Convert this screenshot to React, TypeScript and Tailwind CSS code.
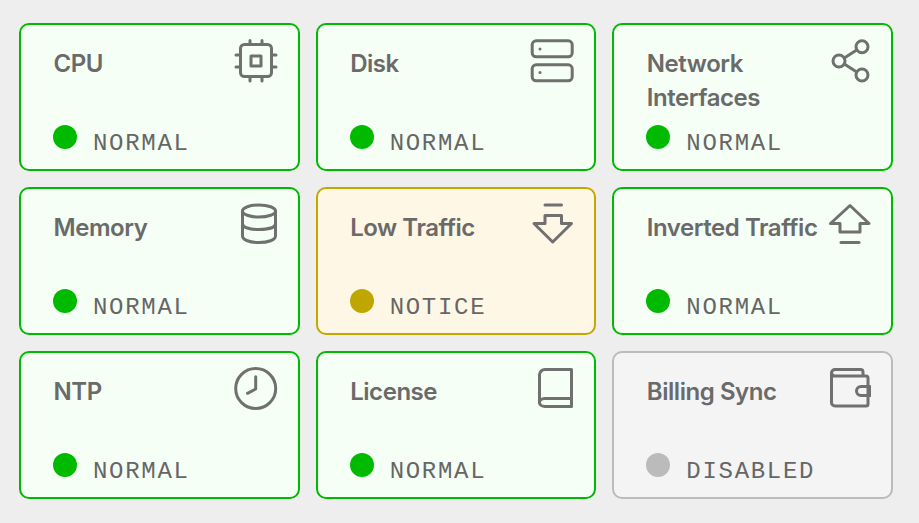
import type { ReactNode } from 'react';

type Status = 'normal' | 'notice' | 'disabled';

interface CardData {
  title: ReactNode;
  status: Status;
  icon: ReactNode;
}

const cardStyles: Record<Status, string> = {
  normal: 'border-[#00ba00] bg-[#f5fff5]',
  notice: 'border-[#c4a800] bg-[#fff7e5]',
  disabled: 'border-[#bbbbbb] bg-[#f4f4f4]',
};

const dotStyles: Record<Status, string> = {
  normal: 'bg-[#00ba00]',
  notice: 'bg-[#bfa600]',
  disabled: 'bg-[#bbbbbb]',
};

function Icon({ children }: { children: ReactNode }) {
  return (
    <svg
      viewBox="0 0 44 44"
      className="h-[44px] w-[44px] shrink-0 text-[#707070]"
      fill="none"
      stroke="currentColor"
      strokeWidth="3"
      strokeLinecap="round"
      strokeLinejoin="round"
    >
      {children}
    </svg>
  );
}

const cards: CardData[] = [
  {
    title: 'CPU',
    status: 'normal',
    icon: (
      <Icon>
        <rect x="6.5" y="5.5" width="31" height="32" rx="4" />
        <rect x="17" y="17" width="10" height="10" />
        <path d="M16 1.5v4M28 1.5v4M16 38v4M28 38v4M2 16h4M2 28h4M38 16h4M38 28h4" />
      </Icon>
    ),
  },
  {
    title: 'Disk',
    status: 'normal',
    icon: (
      <Icon>
        <rect x="2.2" y="1.8" width="40" height="16" rx="4" />
        <rect x="2.2" y="25.8" width="40" height="16" rx="4" />
        <circle cx="10" cy="10" r="1.5" fill="currentColor" stroke="none" />
        <circle cx="10" cy="33.5" r="1.5" fill="currentColor" stroke="none" />
      </Icon>
    ),
  },
  {
    title: 'Network Interfaces',
    status: 'normal',
    icon: (
      <Icon>
        <circle cx="35" cy="7.7" r="6" />
        <circle cx="12" cy="22" r="6" />
        <circle cx="35" cy="36" r="6" />
        <path d="M17.3 19l12.4-8M17.3 25l12.4 8" />
      </Icon>
    ),
  },
  {
    title: 'Memory',
    status: 'normal',
    icon: (
      <Icon>
        <ellipse cx="25" cy="8" rx="16.5" ry="6" />
        <path d="M8.5 8v25c0 4 7.5 6.500 16.500 6.500s16.500-2.500 16.500-6.500V8" />
        <path d="M8.500 20.500c0 4 7.500 6 16.500 6s16.500-2 16.500-6" />
      </Icon>
    ),
  },
  {
    title: 'Low Traffic',
    status: 'notice',
    icon: (
      <Icon>
        <path d="M15 2h16.500" />
        <path d="M15 12.500h16.500V20.500H41.500L22.700 39 4 20.500H15Z" />
      </Icon>
    ),
  },
  {
    title: 'Inverted Traffic',
    status: 'normal',
    icon: (
      <Icon>
        <path d="M23 2.500 42 20.500H33V29H13V20.500H3.500Z" />
        <path d="M14 39.500h18" />
      </Icon>
    ),
  },
  {
    title: 'NTP',
    status: 'normal',
    icon: (
      <Icon>
        <circle cx="21.700" cy="21.500" r="20" />
        <path d="M21.700 9.700V22l-8.200 4.300" />
      </Icon>
    ),
  },
  {
    title: 'License',
    status: 'normal',
    icon: (
      <Icon>
        <path d="M41.500 2.500V39.500H15a5.500 4 0 0 1-5.500-4V8A5.500 5.500 0 0 1 15 2.500Z" />
        <path d="M9.500 35.500a5 4 0 0 1 5-4H41.500" />
      </Icon>
    ),
  },
  {
    title: 'Billing Sync',
    status: 'disabled',
    icon: (
      <Icon>
        <path d="M36 9V5a2.500 2.500 0 0 0-2.500-2.500H8A3.500 3.500 0 0 0 4.500 6v29.500A3.500 3.500 0 0 0 8 39H39a2 2 0 0 0 2-2V11a2 2 0 0 0-2-2H8A3.500 3.500 0 0 1 4.500 6" />
        <path d="M43 19.500H34a4.500 4.500 0 0 0 0 9H43Z" />
      </Icon>
    ),
  },
];

function StatusCard({ title, status, icon }: CardData) {
  return (
    <div className={`flex h-[148px] flex-col rounded-[10px] border-2 pl-[32px] pr-[20px] pt-[14px] pb-[7px] ${cardStyles[status]}`}>
      <div className="flex items-start justify-between">
        <div className="mt-[8px] min-w-0 flex-1 pl-[0.5px] text-[24px] leading-[34px] font-semibold tracking-[-0.45px] text-[#6a6a6a] [font-family:Inter,sans-serif]">
          {title}
        </div>
        {icon}
      </div>
      <div className="mt-auto flex items-start gap-4">
        <span className={`mt-px h-6 w-6 rounded-full ${dotStyles[status]}`} />
        <span className="pt-[2px] text-[24px] leading-[36px] tracking-[1.7px] text-[#666666] uppercase [font-family:'Liberation_Mono',monospace]">
          {status}
        </span>
      </div>
    </div>
  );
}

export default function App() {
  return (
    <div className="min-h-screen bg-[#eeeeee] pt-[23px] pl-[19px] pr-[26px]">
      <div className="grid grid-cols-3 gap-4">
        {cards.map((card, i) => (
          <StatusCard key={i} {...card} />
        ))}
      </div>
    </div>
  );
}
